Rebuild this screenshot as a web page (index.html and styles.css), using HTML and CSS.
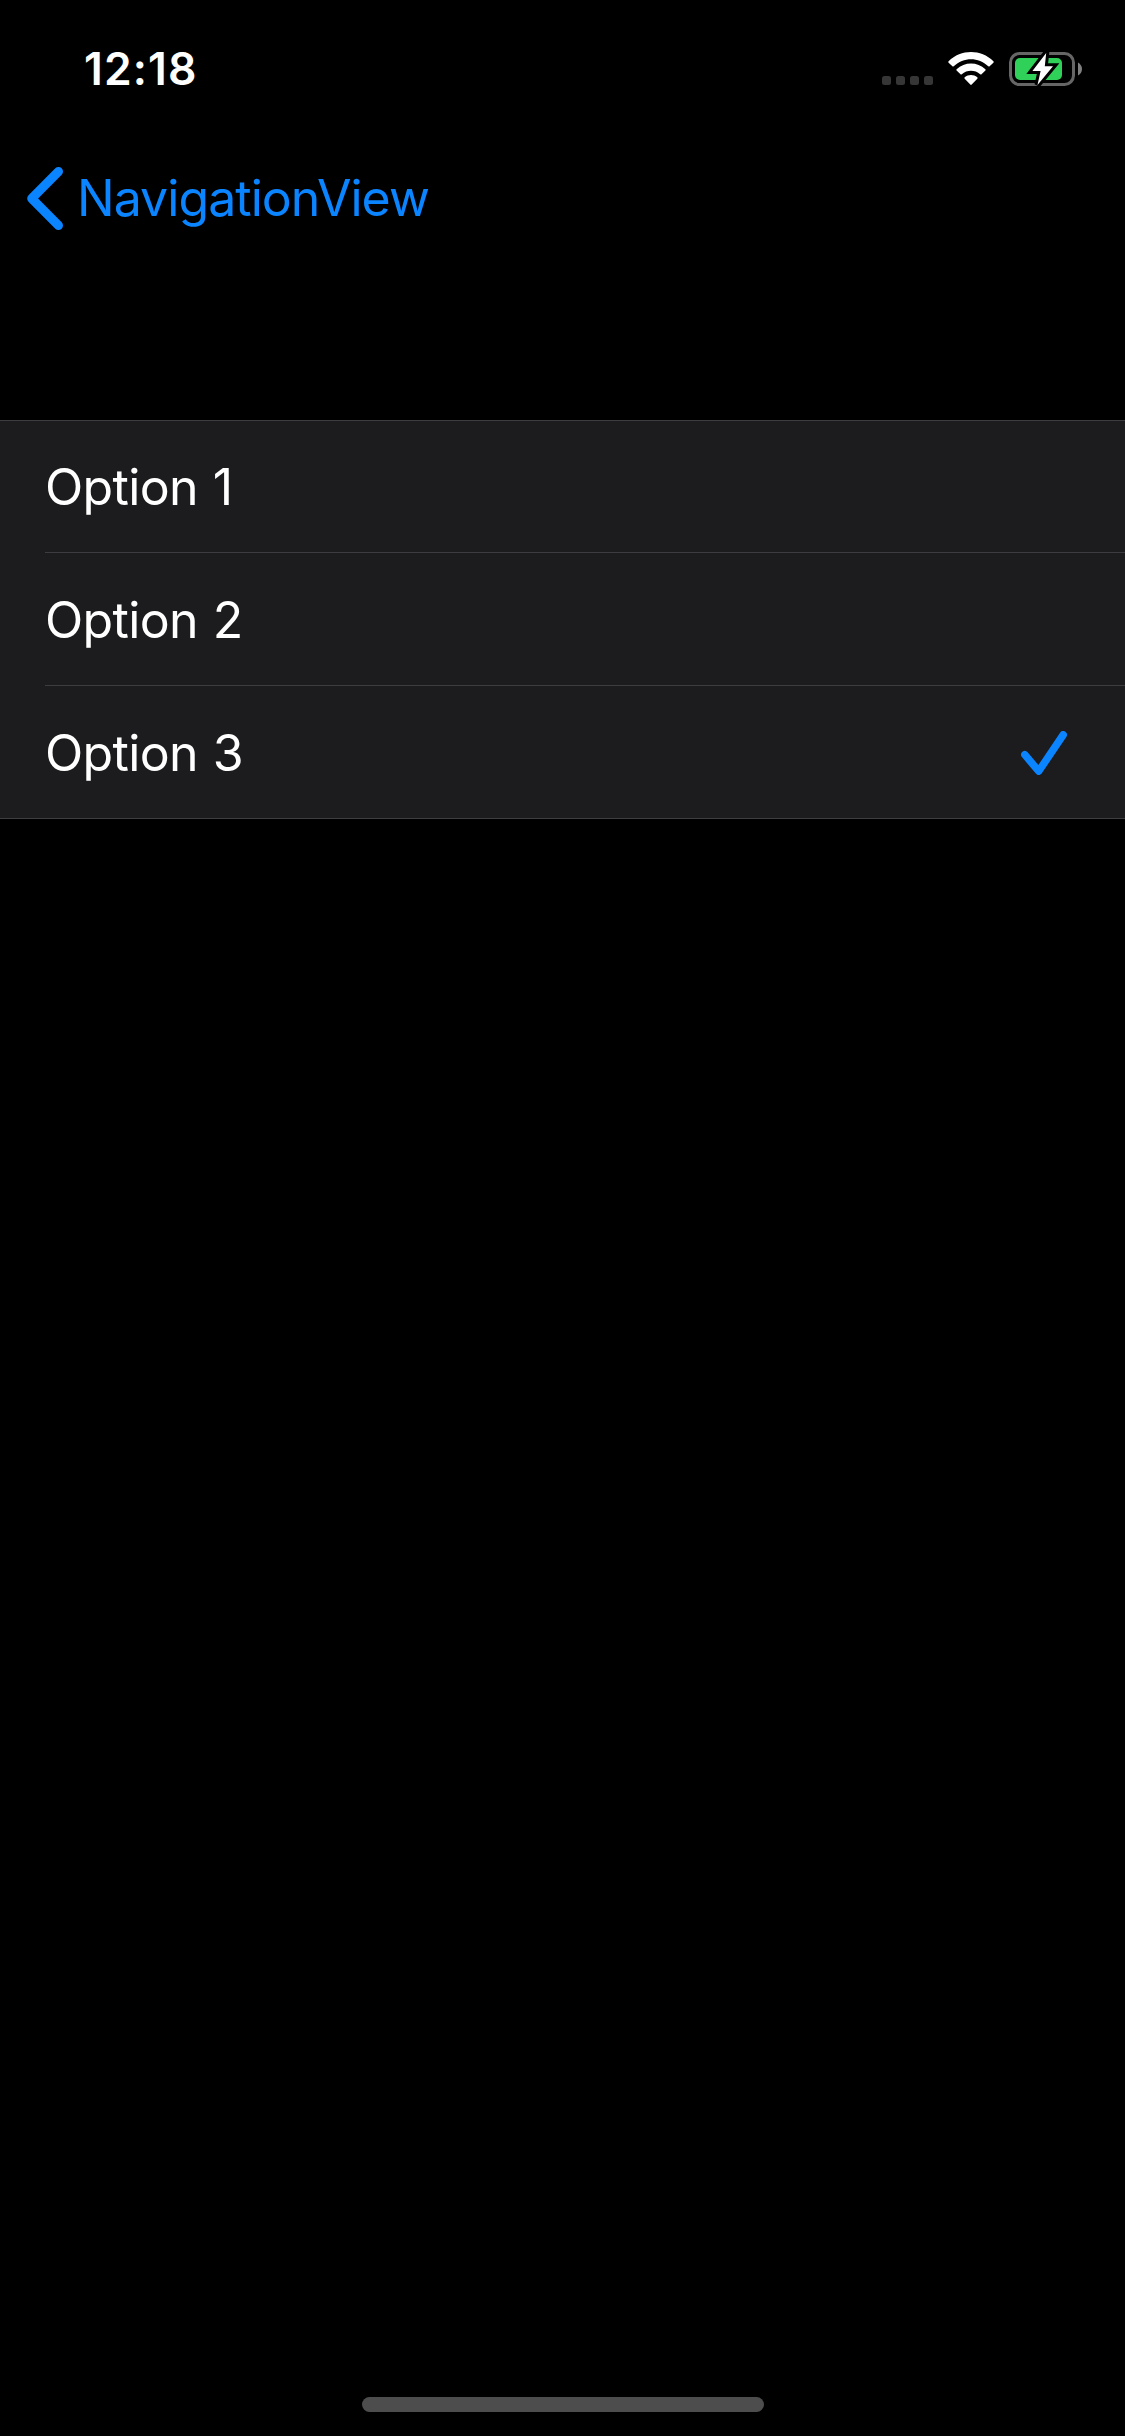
FILE: index.html
```html
<!DOCTYPE html>
<html lang="en">
<head>
<meta charset="utf-8">
<title>NavigationView</title>
<link rel="stylesheet" href="styles.css">
</head>
<body>
<div class="screen">
  <header class="status-bar">
    <span class="time">12:18</span>
    <div class="indicators">
      <svg class="signal" width="51" height="9" viewBox="0 0 51 9" fill="#363636">
        <rect width="9" height="9" rx="2.5"/><rect x="14" width="9" height="9" rx="2.5"/><rect x="28" width="9" height="9" rx="2.5"/><rect x="42" width="9" height="9" rx="2.5"/>
      </svg>
      <svg class="wifi" width="46" height="34" viewBox="0 0 46 34" fill="#fff">
        <path d="M.6 9.3C13-3 33-3 45.400 9.300Q46 10 45.400 10.700L41.600 14.300Q41 14.900 40.300 14.300C30.500 4.900 15.500 4.900 5.700 14.300Q5 14.900 4.400 14.300L.6 10.700Q0 10 .6 9.300Z"/>
        <path d="M8.600 17.300C16.700 9.500 29.300 9.500 37.400 17.300Q38 18 37.400 18.600L33.500 22.200Q32.900 22.800 32.200 22.200C27 17.600 19 17.600 13.800 22.200Q13.100 22.800 12.500 22.200L8.600 18.600Q8 18 8.600 17.300Z"/>
        <path d="M16.700 25.300C20.300 22.300 25.700 22.300 29.300 25.300Q30 26 29.300 26.700L23.700 32.600Q23 33.300 22.300 32.600L16.700 26.700Q16 26 16.700 25.300Z"/>
      </svg>
      <svg class="battery" width="74" height="34" viewBox="0 0 74 34">
        <rect x="1.500" y="1.500" width="63" height="31" rx="9" fill="none" stroke="#666" stroke-width="3"/>
        <path d="M69 10.500Q73 13 73 17T69 23.500Z" fill="#808080"/>
        <rect x="6" y="6" width="47" height="22" rx="5" fill="#30d158"/>
        <path d="M37.200 1L23.400 19H31.600L28.500 33L44 14.300H35.800Z" fill="#fff" stroke="#000" stroke-width="6" paint-order="stroke"/>
      </svg>
    </div>
  </header>
  <nav class="nav-bar">
    <a class="back">
      <svg class="chevron" width="36" height="64" viewBox="0 0 36 64" fill="none" stroke="#0a84ff" stroke-width="9" stroke-linecap="round" stroke-linejoin="round"><path d="M31.500 5.500L4.700 32.500L31.500 59.500"/></svg>
      <span class="back-label">NavigationView</span>
    </a>
  </nav>
  <main class="options">
    <div class="option option-first"><div class="option-body"><span>Option 1</span></div></div>
    <div class="option"><div class="option-body"><span>Option 2</span></div></div>
    <div class="option option-last"><div class="option-body"><span>Option 3</span>
      <svg class="check" width="46" height="44" viewBox="0 0 46 44" fill="none" stroke="#0a84ff" stroke-width="7.500" stroke-linecap="round" stroke-linejoin="round"><path d="M3.800 23.700L17.700 40.200L42.200 3.800"/></svg>
    </div></div>
  </main>
  <footer class="home"><div class="home-indicator"></div></footer>
</div>
</body>
</html>
```
FILE: styles.css
```css
* { box-sizing: border-box; }
body { margin: 0; background: #000; }
svg { display: block; flex: none; }
.screen {
  width: 1125px;
  height: 2436px;
  display: flex;
  flex-direction: column;
  background: #000;
  color: #fff;
  font-family: Inter, "Liberation Sans", sans-serif;
  font-size: 50px;
}
.status-bar {
  height: 132px;
  padding: 0 42px 0 84px;
  display: flex;
  justify-content: space-between;
  align-items: flex-start;
}
.time {
  margin-top: 42px;
  font-size: 44.5px;
  font-weight: 600;
  letter-spacing: 1.1px;
  line-height: 54px;
}
.indicators {
  display: flex;
  align-items: flex-end;
  height: 34px;
  margin-top: 52px;
}
.signal { margin-bottom: 1px; }
.wifi { margin-left: 15px; }
.battery { margin-left: 15px; }
.nav-bar {
  height: 132px;
  padding-left: 27px;
  display: flex;
  align-items: center;
}
.back {
  display: flex;
  align-items: center;
  gap: 14px;
  color: #0a84ff;
  letter-spacing: -0.95px;
  line-height: 60px;
}
.options {
  margin-top: 156px;
  border-top: 1px solid #3d3d41;
  background: #1c1c1e;
}
.option { height: 133px; padding-left: 45px; }
.option-first { height: 132px; }
.option-body {
  height: 100%;
  padding-top: 1px;
  padding-right: 58px;
  display: flex;
  justify-content: space-between;
  align-items: center;
  border-bottom: 1px solid #3d3d41;
  letter-spacing: -0.65px;
  word-spacing: 1.3px;
  line-height: 60px;
}
.option-last { border-bottom: 1px solid #3d3d41; }
.option-last .option-body { border-bottom: 0; }
.home {
  margin-top: auto;
  padding-bottom: 24px;
  display: flex;
  justify-content: center;
}
.home-indicator {
  width: 402px;
  height: 15px;
  border-radius: 8px;
  background: #4d4d4d;
}
```
